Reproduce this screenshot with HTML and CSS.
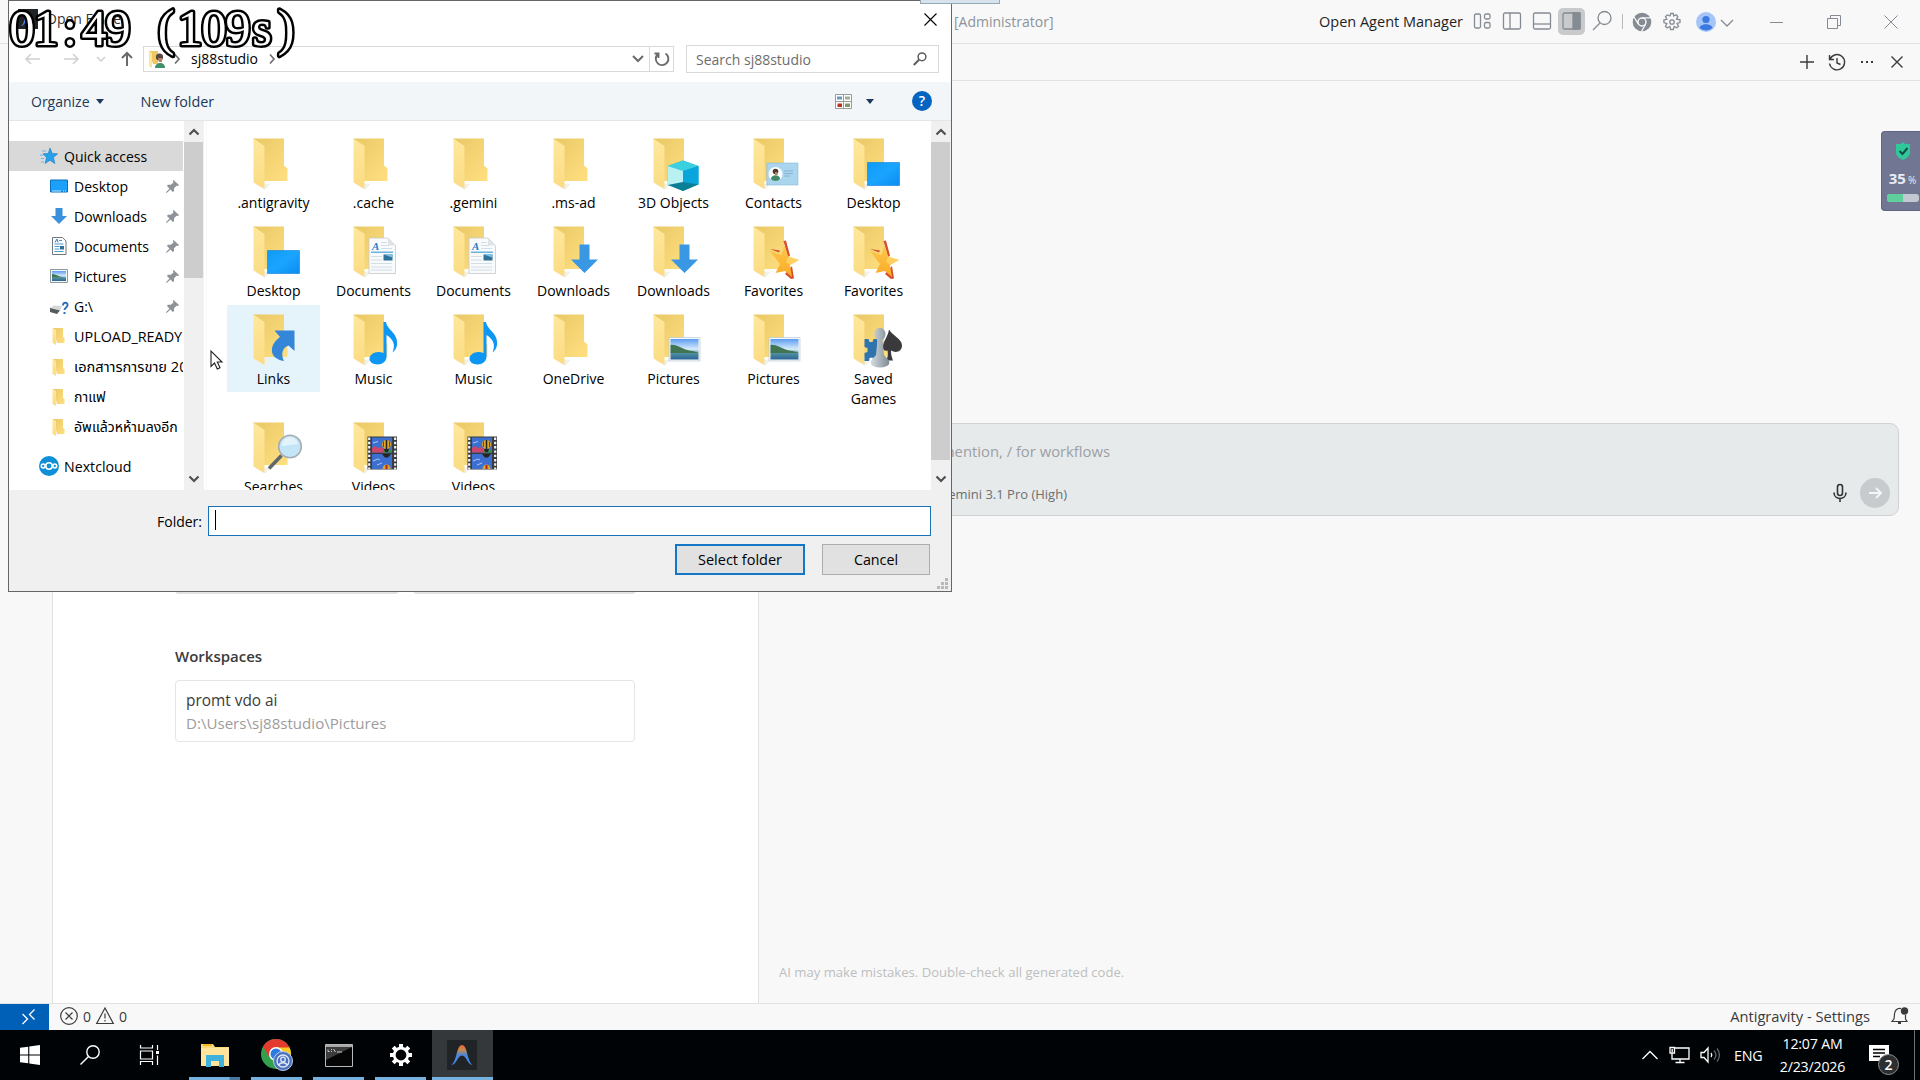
FILE: index.html
```html
<!DOCTYPE html>
<html lang="en">
<head>
    <meta charset="UTF-8">
    <meta name="viewport" content="width=device-width, initial-scale=1.0">
    <title>Antigravity - Settings</title>
    <link rel="stylesheet" href="styles.css">
</head>
<body>
    <!-- Shared icons -->
    <svg class="defs" width="0" height="0">
        <defs>
            <linearGradient id="gBack" x1="0" y1="0" x2="1" y2="1"><stop offset="0" stop-color="#e9c866"/><stop offset="1" stop-color="#ffdf80"/></linearGradient>
            <linearGradient id="gFlap" x1="0" y1="0" x2="0" y2="1"><stop offset="0" stop-color="#ffe79c"/><stop offset="1" stop-color="#fbdc83"/></linearGradient>
            <linearGradient id="gBlue" x1="0" y1="0" x2="1" y2="1"><stop offset="0" stop-color="#0d9cf8"/><stop offset=".5" stop-color="#1ba4ff"/><stop offset="1" stop-color="#0a8cf0"/></linearGradient>
            <linearGradient id="gSky" x1="0" y1="0" x2="0" y2="1"><stop offset="0" stop-color="#5c9cf0"/><stop offset=".5" stop-color="#d8ecfa"/><stop offset=".7" stop-color="#4f8fa0"/><stop offset="1" stop-color="#2c6597"/></linearGradient>
            <linearGradient id="gStar" x1="0" y1="0" x2="0" y2="1"><stop offset="0" stop-color="#fdc94c"/><stop offset="1" stop-color="#fba927"/></linearGradient>
            <linearGradient id="gPawn" x1="0" y1="0" x2="1" y2="0"><stop offset="0" stop-color="#d6dde1"/><stop offset="1" stop-color="#7c8a93"/></linearGradient>
            <linearGradient id="gPeak" x1="0" y1="0" x2="0" y2="1"><stop offset="0" stop-color="#e8663c"/><stop offset=".25" stop-color="#c98a4a"/><stop offset=".5" stop-color="#4b86d8"/><stop offset="1" stop-color="#3d8bf5"/></linearGradient>
        </defs>
        <symbol id="folder" viewBox="0 0 55 54">
            <path d="M9 46l10 5.500 6-6z" fill="#f0f0ee"/>
            <path d="M7.500.5H38V27.500l3.500 3V43H18z" fill="url(#gBack)"/>
            <path d="M7.500.5L18.500 8v43L7.500 44.500z" fill="url(#gFlap)"/>
        </symbol>
        <symbol id="folder-sm" viewBox="0 0 18 18">
            <path d="M3 1h10v9l1.500 1v5H7z" fill="url(#gBack)"/>
            <path d="M2.500 1L6 3v15l-3.500-2z" fill="url(#gFlap)"/>
        </symbol>
        <symbol id="o-desktop" viewBox="0 0 55 54">
            <path d="M21.500 24.500h32v23h-32z" fill="url(#gBlue)" stroke="#0880dc" stroke-width=".6"/>
        </symbol>
        <symbol id="o-doc" viewBox="0 0 55 54">
            <path d="M23 12h19l7.500 7.500v28H23z" fill="#f8fafb" stroke="#c5c9cc" stroke-width=".8"/>
            <path d="M42 12v7.500h7.500z" fill="#dfe3e6"/>
            <path d="M35 16.500h6M35 19.500h8M35 22.500h11M25 30.500h11M25 34h11M25 37.500h21M25 41h21M25 44h21" stroke="#cddae3" stroke-width=".9"/>
            <path d="M25 26.200h22" stroke="#45a3d9" stroke-width="1.200"/>
            <path d="M37.500 28.500h9v6h-9z" fill="#2f7199"/><path d="M37.500 28.500h9v3z" fill="#7cc2ea"/>
            <text x="26" y="24" font-family="Liberation Serif, serif" font-size="11" font-style="italic" font-weight="bold" fill="#2c7fc4">A</text>
        </symbol>
        <symbol id="o-down" viewBox="0 0 55 54">
            <path d="M33.500 18.500h10v15H52L38.500 47 25 33.500h8.500z" fill="#3a97e4"/>
        </symbol>
        <symbol id="o-star" viewBox="0 0 55 54">
            <path d="M37.500 15l2.500-.5 4 15-2 2zM24 23l10 1.500-1 2zM46 40l2 12.500-3 .5-6-5z" fill="#d5512b"/>
            <path d="M38.500 19l3.700 11.500L53 34l-9 5 2 12-7-6L29.500 47l4.500-9L24 25l11.500 4z" fill="url(#gStar)"/>
            <path d="M42.200 30.500L53 34l-9 5-4-3z" fill="#ffdf79" opacity=".6"/>
        </symbol>
        <symbol id="o-music" viewBox="0 0 55 54">
            <path d="M37.500 8h2.500c1 8 12.500 11 11 23-.5 3-2 6-4.500 7.500 3-7 1.500-13-6-17.500V43c0 4-4 7.500-9 7.500-4.500 0-8-2.200-8-5.700 0-4 4.200-6.800 9-6.800 1.800 0 3.500.3 5 1z" fill="#0d96f2"/>
        </symbol>
        <symbol id="o-pic" viewBox="0 0 55 54">
            <path d="M23 23.500h31v23.500H23z" fill="#f3f6f8" stroke="#b9c4cc" stroke-width=".6"/>
            <path d="M24.500 25h28v20.500h-28z" fill="url(#gSky)"/>
            <path d="M24.500 31c5-1 10 3 15 4.500s9 1.500 13 3.500h-28z" fill="#3f7552"/>
        </symbol>
        <symbol id="o-video" viewBox="0 0 55 54">
            <path d="M21.500 14.500h29.500v33H21.500z" fill="#3a3c40"/>
            <path d="M23.200 15.500v32M49.200 15.500v32" stroke="#f1f3f4" stroke-width="2.200" stroke-dasharray="2.400 1.900"/>
            <path d="M26 15.500h20v15H26zM26 32h20v15H26z" fill="#3c6fd0"/>
            <path d="M26 26l3-2 3 2 3-1 4 3v2.500H26z" fill="#c8476a"/><path d="M37 28h9v2.500h-9z" fill="#32964a"/>
            <ellipse cx="40.500" cy="22.500" rx="4.500" ry="4.500" fill="#e3a522"/><path d="M37.500 19.500v5.500M43.500 19.500v5.500" stroke="#a6252e"/><path d="M40.500 18v9" stroke="#27231f" stroke-width="1.500"/><path d="M38 27l5 0-1 3h-3z" fill="#27231f"/>
            <path d="M36 32h9l-3 3.500h-3z" fill="#27231f"/><path d="M36.500 47c0-6 8-6 8 0z" fill="#e3a522"/><path d="M39.500 43h2v4h-2z" fill="#a6252e"/>
            <path d="M27 39l5-2 2 1M27 21l5-1.500M31 43l5-2" stroke="#a9c7f6" fill="none"/>
        </symbol>
        <symbol id="pin" viewBox="0 0 13 13">
            <path d="M7.500 0L13 5l-1 1-1.500-.3L8 8.200v3L6.800 12 4.500 9.500.7 13 0 12.300 3.500 8.500 1 6l.8-1.200h3L7.500 2.500 6.800.8z" fill="#8d9399"/>
        </symbol>
    </svg>

    <!-- Editor window -->
    <div class="titlebar">
        <span class="titlebar-name">[Administrator]</span>
        <span class="agent-link">Open Agent Manager</span>
        <div class="layout-icons">
            <svg width="30" height="27" viewBox="0 0 30 27" class="line"><rect x="6.500" y="6" width="6" height="14" rx="1.500"/><rect x="16.500" y="6" width="5.500" height="5" rx="1.500"/><rect x="16.500" y="14.500" width="5.500" height="5.500" rx="1.500"/></svg>
            <svg width="30" height="27" viewBox="0 0 30 27" class="line"><rect x="5.500" y="5" width="17" height="16" rx="1.500"/><path d="M12 5v16"/></svg>
            <svg width="30" height="27" viewBox="0 0 30 27" class="line"><rect x="5.500" y="5" width="17" height="16" rx="1.500"/><path d="M5.500 16h17"/></svg>
            <svg width="27" height="27" viewBox="0 0 27 27" class="line active"><rect x="5" y="5" width="17" height="16" rx="1.500"/><path d="M15 5h7v16h-7z" fill="#858b92"/></svg>
            <svg width="35" height="27" viewBox="0 0 35 27" class="line"><circle cx="19.500" cy="10" r="6.500"/><path d="M15 15l-7 7"/></svg>
        </div>
        <span class="divider"></span>
        <div class="account-icons">
            <svg width="20" height="20" viewBox="0 0 20 20"><circle cx="10" cy="10" r="9.300" fill="#858b92"/><circle cx="10" cy="10" r="4" fill="#858b92" stroke="#f8f8f8" stroke-width="1.500"/><path d="M10 5.800h9M6.400 12.200L2 5M13.600 12.200L9.500 19.500" stroke="#f8f8f8" stroke-width="1.300"/></svg>
            <svg width="20" height="20" viewBox="0 0 20 20" class="line"><circle cx="10" cy="10" r="2.200"/><path d="M8.800 1.500h2.400l.6 2.500 2.300-1.300 1.700 1.700L14.500 7l3.500.8v2.700l-3 .9 1.500 2.700-1.700 1.700-2.600-1.400-.8 3.100H8.600l-.8-3L5.200 16l-1.800-1.700 1.500-2.700-3-1V8l3-.8-1.400-2.500 1.800-1.800L7.900 4z"/></svg>
            <svg width="20" height="20" viewBox="0 0 20 20" class="avatar"><circle cx="10" cy="10" r="10" fill="#a5c5f8"/><circle cx="10" cy="7.500" r="3.600" fill="#3b78e0"/><path d="M3.500 16c1-5 12-5 13 0a10 10 0 0 1-13 0z" fill="#3b78e0"/></svg>
            <svg width="16" height="20" viewBox="0 0 16 20" class="line"><path d="M2 8l6 6 6-6"/></svg>
        </div>
        <div class="window-buttons">
            <svg width="14" height="14" viewBox="0 0 14 14" class="thin"><path d="M0 7.500h13"/></svg>
            <svg width="14" height="14" viewBox="0 0 14 14" class="thin"><path d="M.5 3.500h10v10H.5zM3.500 3V.5h10v10H11"/></svg>
            <svg width="14" height="14" viewBox="0 0 14 14" class="thin"><path d="M.5.5l13 13M13.500.5l-13 13"/></svg>
        </div>
    </div>

    <div class="workbench">
        <div class="activity-bar"></div>
        <div class="editor">
            <div class="start-buttons"><span></span><span></span></div>
            <h2>Workspaces</h2>
            <div class="workspace">
                <span class="workspace-name">promt vdo ai</span>
                <span class="workspace-path">D:\Users\sj88studio\Pictures</span>
            </div>
        </div>
        <div class="agent-panel">
            <div class="panel-header">
                <svg width="20" height="20" viewBox="0 0 20 20"><path d="M10 3v14M3 10h14"/></svg>
                <svg width="20" height="20" viewBox="0 0 20 20"><path d="M2.500 3v4.500H7M3 7.200A7.600 7.600 0 1 1 2.500 11.500M10 6v5l3.500 1.500"/></svg>
                <svg width="20" height="20" viewBox="0 0 20 20"><path d="M4 10h2M9 10h2M14 10h2" stroke-width="2"/></svg>
                <svg width="20" height="20" viewBox="0 0 20 20"><path d="M4.500 4.500l11 11M15.500 4.500l-11 11"/></svg>
            </div>
            <div class="prompt-box">
                <div class="prompt-text">Ask anything, @ to mention, / for workflows</div>
                <div class="prompt-tools">
                    <span class="model">Gemini 3.1 Pro (High)</span>
                    <svg width="20" height="20" viewBox="0 0 20 20" fill="none" stroke="#333" stroke-width="1.600"><rect x="7.500" y="1.500" width="5" height="11" rx="2.500"/><path d="M4 9.500c0 8 12 8 12 0M10 15.500V19"/></svg>
                    <svg width="30" height="30" viewBox="0 0 30 30" class="send"><circle cx="15" cy="15" r="15" fill="#c8cbce"/><path d="M9 15h12M16 10l5 5-5 5" fill="none" stroke="#f5f6f7" stroke-width="1.800"/></svg>
                </div>
            </div>
            <div class="disclaimer">AI may make mistakes. Double-check all generated code.</div>
        </div>
    </div>

    <div class="statusbar">
        <span class="remote"><svg width="16" height="18" viewBox="0 0 16 18"><path d="M1.500 6l5 5-5 5M13.500 1.500l-5 5 5 5" fill="none" stroke="#fff" stroke-width="1.300"/></svg></span>
        <svg width="20" height="20" viewBox="0 0 20 20"><circle cx="10" cy="10" r="8.300"/><path d="M6.500 6.500l7 7M13.500 6.500l-7 7"/></svg>
        <span class="count">0</span>
        <svg width="20" height="20" viewBox="0 0 20 20"><path d="M10 2l8.300 15.500H1.700zM10 7.500v5M10 14v1.500"/></svg>
        <span class="count">0</span>
        <span class="status-name">Antigravity - Settings</span>
        <svg width="20" height="20" viewBox="0 0 20 20"><path d="M11 2.500C6.500 2 5 4 4.500 8l-.5 5-2 2.500h15L15.500 13V9"/><path d="M8 17h3" stroke-width="2"/><circle cx="14.500" cy="5" r="3.700" fill="#3b3b3b" stroke="none"/></svg>
    </div>

    <!-- Windows taskbar -->
    <div class="taskbar">
        <div class="task plain"><svg width="20" height="20" viewBox="0 0 20 20" fill="#fff"><path d="M0 2.800l8.200-1.100v7.800H0zM9.300 1.500L20 0v9.500H9.300zM0 10.500h8.200v7.800L0 17.200zM9.300 10.500H20V20L9.300 18.500z"/></svg></div>
        <div class="task plain"><svg width="20" height="20" viewBox="0 0 20 20" fill="none" stroke="#fff" stroke-width="1.400"><circle cx="13" cy="7" r="6.200"/><path d="M8.500 11.500L.5 19.500"/></svg></div>
        <div class="task plain"><svg width="22" height="20" viewBox="0 0 22 20" fill="none" stroke="#fff" stroke-width="1.200"><path d="M1.500 0v3h12V0M1.500 20v-3.500h12V20M1.500 6h12v8h-12zM18.500 0v5M18.500 10.500V20"/><path d="M17 6h3v3h-3z" fill="#fff" stroke="none"/></svg></div>
        <div class="task wide running stacked"><svg width="28" height="24" viewBox="0 0 28 24"><path d="M0 1h12l2 3h14v19H0z" fill="#fbd977"/><path d="M0 5h28v18H0z" fill="#ffe59b"/><path d="M2 1h9v2H2z" fill="#f3b72b"/><path d="M5 24V12h18v12h-5v-6h-8v6z" fill="#3fb1df"/></svg></div>
        <div class="task running"><svg width="32" height="32" viewBox="0 0 32 32"><circle cx="15" cy="15" r="15" fill="#34a04d"/><path d="M2 7.500A15 15 0 0 1 28 7.500L15 15z" fill="#e33b2e"/><path d="M28 7.500A15 15 0 0 1 15 30l7-12-7-10h13z" fill="#fbc91f"/><path d="M2 7.500h26v1H15l-7 9z" fill="#e33b2e"/><circle cx="15" cy="15" r="7" fill="#fff"/><circle cx="15" cy="15" r="5.500" fill="#2d7be0"/><circle cx="22" cy="22" r="9.500" fill="#4a72bd" stroke="#b9ccee"/><circle cx="22" cy="22" r="6" fill="none" stroke="#dfe8fa" stroke-width="1.300"/><circle cx="22" cy="20.500" r="2.300" fill="none" stroke="#dfe8fa" stroke-width="1.300"/><path d="M18 26c1-3 7-3 8 0" fill="none" stroke="#dfe8fa" stroke-width="1.300"/></svg></div>
        <div class="task running"><svg width="28" height="23" viewBox="0 0 28 23"><path d="M.5.5h27v22H.5z" fill="#050505" stroke="#b9b9b9"/><path d="M1 1h26v2H1z" fill="#a9a9a9"/><path d="M1 3h26L1 16z" fill="#3c3c3c"/><path d="M3 5.500v2h1.500M6.500 5v1M6.500 7v1M8.500 5l2 3M12 8h5" stroke="#ddd" fill="none" stroke-width=".9"/></svg></div>
        <div class="task running"><svg width="24" height="24" viewBox="0 0 24 24" fill="none" stroke="#fff"><circle cx="12" cy="12" r="6.800" stroke-width="2.800"/><path d="M12 1v4M12 19v4M1 12h4M19 12h4M4.200 4.200L7 7M17 17l2.800 2.800M4.200 19.800L7 17M17 7l2.800-2.800" stroke-width="4"/></svg></div>
        <div class="task running current"><svg width="30" height="30" viewBox="0 0 30 30"><path d="M0 0h30v30H0z" fill="#202427"/><path d="M4.500 25C10 21 9.500 5 15 5s5 16 10.500 20c-5 0-6-9.500-10.500-9.500S9.500 25 4.500 25z" fill="url(#gPeak)"/></svg></div>

        <div class="tray">
            <svg width="18" height="18" viewBox="0 0 18 18"><path d="M1.500 13L9 5.500l7.500 7.500"/></svg>
            <svg width="21" height="18" viewBox="0 0 21 18"><path d="M5 2h15v11H3V7M11 13v3.500M6.500 16.500h9"/><path d="M1 1.500h4.500V7H1zM3.200 3v3" /></svg>
            <svg width="21" height="18" viewBox="0 0 21 18"><path d="M1 6.500h3l4-4.500v14l-4-4.500H1z"/><path d="M11 7q1.500 2 0 4"/><path d="M14 4.500q4 4.500 0 9M17 2.500q5 6.500 0 13" stroke="#666"/></svg>
            <span class="lang">ENG</span>
            <div class="clock"><span>12:07 AM</span><span>2/23/2026</span></div>
            <div class="notice"><svg width="20" height="20" viewBox="0 0 20 20"><path d="M0 0h20v16h-4v4l-5-4H0z" fill="#fff" stroke="none"/><path d="M4 4.500h12M4 8h12M4 11.500h7" stroke="#000"/></svg><span class="badge">2</span></div>
        </div>
        <span class="show-desktop"></span>
    </div>

    <!-- Open folder dialog -->
    <div class="dialog">
        <div class="dialog-title">
            <svg width="20" height="20" viewBox="0 0 20 20"><path d="M0 0h20v20H0z" fill="#202427"/><path d="M3 17c4-2 3.500-13 7-13s3.500 11 7 13c-4 0-4-6-7-6s-3 6-7 6z" fill="#3d8bf5"/></svg>
            <span>Open Folder</span>
            <svg class="close" width="13" height="13" viewBox="0 0 13 13"><path d="M.5.5l12 12M12.500.5l-12 12" stroke="#000" stroke-width="1.100"/></svg>
        </div>
        <div class="address-row">
            <svg width="115" height="26" viewBox="0 0 115 26" fill="none" stroke="#d0d0d0" stroke-width="1.500"><path d="M31 14H17M22 9l-5 5 5 5M55 14h14M64 9l5 5-5 5M88 12l4 4 4-4"/><path d="M118 21V8M113 13l5-5 5 5" stroke="#6b6b6b" stroke-width="2"/></svg>
            <div class="address">
                <svg class="user" width="17" height="19" viewBox="0 0 17 19"><path d="M1 1h9v13H5z" fill="#ecc964"/><path d="M1 1l3 2v15l-3-2z" fill="#ffe596"/><path d="M7 18c0-6 10-7 10 0z" fill="#3f9169"/><circle cx="11.500" cy="7" r="3.600" fill="#5c4740"/><path d="M10 8h4v4h-3z" fill="#b9805e"/></svg>
                <svg width="10" height="12" viewBox="0 0 10 12"><path d="M3 1.500L7 6l-4 4.500"/></svg>
                <span>sj88studio</span>
                <svg width="10" height="12" viewBox="0 0 10 12"><path d="M3 1.500L7 6l-4 4.500"/></svg>
                <svg class="drop" width="12" height="10" viewBox="0 0 12 10"><path d="M1 2l5 5 5-5" stroke-width="2"/></svg>
                <span class="refresh"><svg width="16" height="16" viewBox="0 0 16 16"><path d="M11.500 2.500A6.300 6.300 0 1 1 4 3M4.500 7V2.500H.5" stroke-width="1.900"/></svg></span>
            </div>
            <div class="search">
                <span>Search sj88studio</span>
                <svg width="14" height="14" viewBox="0 0 14 14" fill="none" stroke="#5e5e5e"><circle cx="9" cy="4.800" r="3.900" stroke-width="1.500"/><path d="M6 7.800L.8 13" stroke-width="2"/></svg>
            </div>
        </div>
        <div class="toolbar">
            <span>Organize</span><i class="caret"></i>
            <span class="new-folder">New folder</span>
            <svg class="view" width="17" height="15" viewBox="0 0 17 15"><path d="M.5.5h16v14H.5zM8.500.5v14M.5 7.500h16" fill="#fff" stroke="#9a9a9a"/><path d="M2 2.500h5v3H2z" fill="#6a9abb"/><path d="M10 2.500h5v3h-5z" fill="#a0ae93"/><path d="M2.500 9.500H7V13H2.500z" fill="#b9331f"/><path d="M10 9.500h5V13h-5z" fill="#7c9a66"/></svg>
            <i class="caret view-caret"></i>
            <span class="help">?</span>
        </div>
        <div class="panes">
            <div class="nav">
                <div class="nav-row top selected"><svg width="18" height="18" viewBox="0 0 18 18"><path d="M10 1l2.200 5.500 5.500.3-4.300 3.700 1.500 6-5-3.200-4.800 3.200 1.400-6L3 6.800l5.300-.3z" fill="#27a0ee" stroke="#1877bd" stroke-width=".6"/><path d="M2 4h4M0 8h3M1 11.500h3M1 15h3" stroke="#65b7ea"/></svg><span>Quick access</span></div>
                <div class="nav-row"><svg width="18" height="18" viewBox="0 0 18 18"><path d="M.5 3h17v12H.5z" fill="#1ba1fb" stroke="#0c6fbd"/><path d="M2 14h9M13 14h1M15 14h1" stroke="#bfe3fb"/></svg><span>Desktop</span><svg class="pin" width="13" height="13"><use href="#pin"/></svg></div>
                <div class="nav-row"><svg width="18" height="18" viewBox="0 0 18 18"><path d="M5.500 1h7v8H17l-8 8-8-8h4.500z" fill="#3a90da"/></svg><span>Downloads</span><svg class="pin" width="13" height="13"><use href="#pin"/></svg></div>
                <div class="nav-row"><svg width="18" height="18" viewBox="0 0 18 18"><path d="M2.500.5h10l3.500 3.500v13.500H2.500z" fill="#fff" stroke="#70797f"/><path d="M4.500 7h9M4.500 9.500h5M4.500 12h5M4.500 14.500h9M9 3.500h3" stroke="#4c9bce"/><path d="M10 9h4v3.500h-4z" fill="#2f7199"/><path d="M5 5.500L7 2l1 3.500" stroke="#2c7fc4" fill="none"/></svg><span>Documents</span><svg class="pin" width="13" height="13"><use href="#pin"/></svg></div>
                <div class="nav-row"><svg width="18" height="18" viewBox="0 0 18 18"><path d="M.5 2.500h17v13H.5z" fill="#f5f7f8" stroke="#8e989f"/><path d="M2 4h14v10H2z" fill="url(#gSky)"/><path d="M2 7c4 0 6 3 14 3.500H2z" fill="#3f7552"/></svg><span>Pictures</span><svg class="pin" width="13" height="13"><use href="#pin"/></svg></div>
                <div class="nav-row"><svg width="18" height="18" viewBox="0 0 18 18"><path d="M0 11l4-2.500 8 .5-2 4.500z" fill="#d5d7d8"/><path d="M0 11l10 2.500L7 17l-7-2z" fill="#565b5e"/><path d="M13 8.500c0-4 5-3.500 4.500 0-.3 2.500-3 2-3 4.500M14.500 15v2" fill="none" stroke="#2f6fb3" stroke-width="2"/></svg><span>G:\</span><svg class="pin" width="13" height="13"><use href="#pin"/></svg></div>
                <div class="nav-row upload"><svg width="18" height="18"><use href="#folder-sm"/></svg><span>UPLOAD_READY</span></div>
                <div class="nav-row thai"><svg width="18" height="18"><use href="#folder-sm"/></svg><span class="wide">เอกสาารการขาย 20</span></div>
                <div class="nav-row thai"><svg width="18" height="18"><use href="#folder-sm"/></svg><span>กาแฟ</span></div>
                <div class="nav-row thai"><svg width="18" height="18"><use href="#folder-sm"/></svg><span>อัพแล้วหห้ามลงอีก</span></div>
                <div class="nav-row top cloud"><svg width="20" height="20" viewBox="0 0 20 20"><circle cx="10" cy="10" r="10" fill="#0f8fd8"/><g fill="none" stroke="#fff" stroke-width="1.500"><circle cx="10" cy="10" r="3.200"/><circle cx="4.200" cy="10" r="1.900"/><circle cx="15.800" cy="10" r="1.900"/></g></svg><span>Nextcloud</span></div>
            </div>
            <div class="scroll nav-scroll">
                <svg width="12" height="8" viewBox="0 0 12 8"><path d="M1.500 6.500L6 2l4.500 4.500"/></svg>
                <div class="thumb"></div>
                <svg width="12" height="8" viewBox="0 0 12 8"><path d="M1.500 1.500L6 6l4.500-4.500"/></svg>
            </div>
            <div class="files">
                <div class="file"><svg width="55" height="54"><use href="#folder"/></svg><span>.antigravity</span></div>
                <div class="file"><svg width="55" height="54"><use href="#folder"/></svg><span>.cache</span></div>
                <div class="file"><svg width="55" height="54"><use href="#folder"/></svg><span>.gemini</span></div>
                <div class="file"><svg width="55" height="54"><use href="#folder"/></svg><span>.ms-ad</span></div>
                <div class="file"><svg width="55" height="54"><use href="#folder"/><path d="M37 22.500l15.500 5.500v18L37 53l-15.300-7V28z" fill="#2cb9d2"/><path d="M37 22.500l15.500 5.500L37 33l-15.300-5z" fill="#3ccfe0"/><path d="M21.700 28L37 33v12l-15.300 3z" fill="#b9f0f2"/><path d="M52.500 28L37 33v11l15.500 3z" fill="#08a6dc"/><path d="M37 44l15.500 2.500L37 53l-15.300-6z" fill="#0b7f95"/></svg><span>3D Objects</span></div>
                <div class="file"><svg width="55" height="54"><use href="#folder"/><path d="M20.800 25H52v22H20.800z" fill="#a9d5ee" stroke="#8ab9d4" stroke-width=".6"/><circle cx="29.500" cy="36" r="7" fill="#fff"/><path d="M25 41c0-5 9-5 9 0-1 2.500-8 2.500-9 0z" fill="#3f8a68"/><circle cx="29.500" cy="33.500" r="2.800" fill="#4b3932"/><path d="M29 34h2.500v3H29z" fill="#b9805e"/><path d="M38 33h9M38 35.500h9M38 38h6" stroke="#7fabc8" stroke-width=".8"/></svg><span>Contacts</span></div>
                <div class="file"><svg width="55" height="54"><use href="#folder"/><use href="#o-desktop"/></svg><span>Desktop</span></div>

                <div class="file"><svg width="55" height="54"><use href="#folder"/><use href="#o-desktop"/></svg><span>Desktop</span></div>
                <div class="file"><svg width="55" height="54"><use href="#folder"/><use href="#o-doc"/></svg><span>Documents</span></div>
                <div class="file"><svg width="55" height="54"><use href="#folder"/><use href="#o-doc"/></svg><span>Documents</span></div>
                <div class="file"><svg width="55" height="54"><use href="#folder"/><use href="#o-down"/></svg><span>Downloads</span></div>
                <div class="file"><svg width="55" height="54"><use href="#folder"/><use href="#o-down"/></svg><span>Downloads</span></div>
                <div class="file"><svg width="55" height="54"><use href="#folder"/><use href="#o-star"/></svg><span>Favorites</span></div>
                <div class="file"><svg width="55" height="54"><use href="#folder"/><use href="#o-star"/></svg><span>Favorites</span></div>

                <div class="file hover"><svg width="55" height="54"><use href="#folder"/><path d="M28.500 16.500h20V37l-6-5.500c-6 2-8 9-4.500 15.500C30 46 25 41 26 35c.5-5 3.500-8.500 8-12z" fill="#3487d8"/></svg><span>Links</span></div>
                <div class="file"><svg width="55" height="54"><use href="#folder"/><use href="#o-music"/></svg><span>Music</span></div>
                <div class="file"><svg width="55" height="54"><use href="#folder"/><use href="#o-music"/></svg><span>Music</span></div>
                <div class="file"><svg width="55" height="54"><use href="#folder"/></svg><span>OneDrive</span></div>
                <div class="file"><svg width="55" height="54"><use href="#folder"/><use href="#o-pic"/></svg><span>Pictures</span></div>
                <div class="file"><svg width="55" height="54"><use href="#folder"/><use href="#o-pic"/></svg><span>Pictures</span></div>
                <div class="file"><svg width="55" height="54"><use href="#folder"/><path d="M18.500 25h4l1 3h3l1-3h4v22h-4l-1-3.500-3 .5-.5 3h-4.500V39l3-1v-4l-3-1z" fill="#2f74ae"/><path d="M43 15.500c3 6 13 9 13 16 0 6-6 8-11 5 0 4 .5 6 2 10h-7c2-3 2-6 1.500-10-3 1-5-1-4.500-4 .5-6 5-10 6-17z" fill="#3a3a3d"/><path d="M31.500 26c-2.500-1.500-3-4.500-3-6.500 0-3.500 3-5.500 5.500-5.500s5.500 2 5.500 5.500c0 2-.5 5-3 6.500l1.500 15 4.500 5c2 3 1 7-8.500 7.500-9.500-.5-10.500-4.500-8.500-7.500l4.500-5z" fill="url(#gPawn)"/></svg><span>Saved Games</span></div>

                <div class="file"><svg width="55" height="54"><use href="#folder"/><path d="M35.500 33.500L23 46.500" stroke="#5f676c" stroke-width="3.500"/><circle cx="44" cy="24.500" r="11.300" fill="#c4e5f7" stroke="#a7adb1" stroke-width="1.600"/><path d="M36 24a8 8 0 0 1 16-2z" fill="#e2f3fc"/></svg><span>Searches</span></div>
                <div class="file"><svg width="55" height="54"><use href="#folder"/><use href="#o-video"/></svg><span>Videos</span></div>
                <div class="file"><svg width="55" height="54"><use href="#folder"/><use href="#o-video"/></svg><span>Videos</span></div>
            </div>
            <div class="scroll">
                <svg width="12" height="8" viewBox="0 0 12 8"><path d="M1.500 6.500L6 2l4.500 4.500"/></svg>
                <div class="thumb"></div>
                <svg width="12" height="8" viewBox="0 0 12 8"><path d="M1.500 1.500L6 6l4.500-4.500"/></svg>
            </div>
        </div>
        <div class="dialog-footer">
            <div class="folder-row"><span>Folder:</span><div class="folder-input"><i></i></div></div>
            <div class="button-row"><button class="primary">Select folder</button><button>Cancel</button></div>
        </div>
        <svg class="grip" width="12" height="12" viewBox="0 0 12 12" fill="#b8b8b8"><path d="M8 0h3v3H8zM4 4h3v3H4zM8 4h3v3H8zM0 8h3v3H0zM4 8h3v3H4zM8 8h3v3H8z"/></svg>
    </div>

    <!-- Floating items over the desktop -->
    <div class="top-tab"></div>
    <div class="monitor">
        <svg width="16" height="18" viewBox="0 0 16 18"><path d="M8 0l2 2h5v8c0 4-3 6-7 8-4-2-7-4-7-8V2h5z" fill="#2fc898"/><path d="M4.500 9l3 3 5-6" fill="none" stroke="#174c48" stroke-width="2"/></svg>
        <div class="percent">35<small>%</small></div>
        <div class="meter"><i></i></div>
    </div>
    <svg class="timer" width="310" height="60"><text y="45" x="22 46 70 94 118 142 166 190 214 238 262 286">01:49 (109s)</text></svg>
    <svg class="cursor" width="14" height="21" viewBox="0 0 14 21"><path d="M1 1v15.500l3.500-3.500 2.800 6 2.700-1.200L7.300 12H12z" fill="#fff" stroke="#222" stroke-width="1.100"/></svg>
</body>
</html>
```

FILE: styles.css
```css
* {
    box-sizing: border-box;
}
body {
    margin: 0;
    width: 1920px;
    height: 1080px;
    overflow: hidden;
    display: flex;
    flex-direction: column;
    position: relative;
    background-color: #f8f8f8;
    font-family: "Open Sans", "Noto Sans", "Segoe UI", sans-serif;
    font-size: 14px;
    color: #000;
    white-space: nowrap;
}
svg {
    display: block;
    flex: none;
    overflow: visible;
}
.defs {
    position: absolute;
}

/* Title bar */
.titlebar {
    height: 44px;
    flex: none;
    display: flex;
    align-items: center;
    border-bottom: 1px solid #e2e2e2;
    padding-left: 954px;
}
.titlebar-name {
    color: #8d9399;
    font-size: 14px;
}
.agent-link {
    margin-left: auto;
    width: 146px;
    font-size: 14.5px;
    color: #1f1f1f;
}
.line, .thin {
    fill: none;
    stroke: #858b92;
    stroke-width: 1.3;
}
.thin {
    stroke-width: 1;
}
.layout-icons {
    display: flex;
    margin-left: 3px;
}
.layout-icons .active {
    background-color: #c9cacb;
    border-radius: 5px;
}
.divider {
    width: 1px;
    height: 15px;
    margin: 0 9px 0 2px;
    background-color: #b5b9bd;
}
.account-icons {
    display: flex;
    gap: 10px;
    width: 103px;
}
.account-icons .avatar {
    margin-left: 4px;
}
.account-icons svg:last-child {
    margin-left: -7px;
}
.window-buttons {
    display: flex;
    gap: 43px;
    margin: 0 22px 0 35px;
}

/* Workbench */
.workbench {
    flex: 1;
    display: flex;
}
.activity-bar {
    width: 53px;
    border-right: 1px solid #e2e2e2;
}
.editor {
    width: 706px;
    background-color: #fff;
    border-right: 1px solid #e2e2e2;
    padding: 530px 122px 0 122px;
}
.start-buttons {
    display: flex;
    gap: 14px;
    height: 20px;
}
.start-buttons span {
    flex: 1;
    background-color: #e2e2e2;
    border-radius: 4px;
}
.editor h2 {
    margin: 52px 0 0 0;
    font-size: 15px;
    line-height: 20px;
    font-weight: 600;
    color: #3b3b3b;
}
.workspace {
    display: flex;
    flex-direction: column;
    width: 460px;
    height: 62px;
    margin-top: 14px;
    padding: 8px 10px;
    border: 1px solid #e5e5e5;
    border-radius: 4px;
    line-height: 23px;
}
.workspace-name {
    font-size: 15.4px;
    color: #3b3b3b;
}
.workspace-path {
    font-size: 15.1px;
    color: #9c9c9c;
}
.agent-panel {
    flex: 1;
    display: flex;
    flex-direction: column;
}
.panel-header {
    height: 37px;
    display: flex;
    justify-content: flex-end;
    align-items: center;
    gap: 10px;
    padding-right: 13px;
    border-bottom: 1px solid #e2e2e2;
    fill: none;
    stroke: #3b3b3b;
    stroke-width: 1.4;
}
.prompt-box {
    margin: 342px 21px 0 19px;
    height: 93px;
    border: 1px solid #d0d3d6;
    border-radius: 9px;
    background-color: #e7eaeb;
    padding: 16px 8px 0 16px;
    display: flex;
    flex-direction: column;
}
.prompt-text {
    color: #9ba0a3;
    font-size: 14.8px;
    line-height: 22px;
    width: 315px;
    display: flex;
    justify-content: flex-end;
}
.prompt-tools {
    display: flex;
    align-items: center;
    margin-top: 16px;
}
.model {
    width: 272px;
    margin-right: auto;
    padding-top: 1px;
    text-align: right;
    font-size: 13px;
    color: #6b6f72;
}
.send {
    margin-left: 10px;
}
.disclaimer {
    margin: auto 0 20px 20px;
    font-size: 13.1px;
    line-height: 22px;
    color: #bcbfc1;
}

/* Status bar */
.statusbar {
    height: 27px;
    flex: none;
    display: flex;
    align-items: center;
    border-top: 1px solid #e2e2e2;
    color: #3b3b3b;
    padding: 0 10px 2px 0;
    fill: none;
    stroke: #3b3b3b;
    stroke-width: 1.2;
}
.remote {
    width: 49px;
    height: 26px;
    margin: 2px 10px 0 0;
    padding: 4px 0 0 21px;
    background-color: #0060b8;
}
.count {
    width: 16px;
    padding-left: 4px;
}
.status-name {
    margin-left: auto;
    margin-right: 20px;
    font-size: 14.7px;
}

/* Taskbar */
.taskbar {
    height: 50px;
    flex: none;
    display: flex;
    background-color: #000305;
    color: #fff;
}
.task {
    width: 62px;
    display: flex;
    align-items: center;
    justify-content: center;
    padding: 0 6px 0 5px;
}
.task.plain {
    width: 60px;
}
.task.running {
    position: relative;
}
.task.wide {
    width: 66px;
    padding-left: 9px;
}
.task.running::after {
    content: "";
    position: absolute;
    left: 5px;
    right: 6px;
    bottom: 0;
    height: 3px;
    background-color: #76b2e0;
}
.task.wide::after {
    left: 9px;
}
.task.stacked::after {
    background-image: linear-gradient(90deg, #76b2e0 40px, #4d7799 41px);
}
.task.current {
    width: 61px;
    margin-left: 0;
    padding: 0 1px 0 0;
    background-color: #34383b;
}
.task.current::after {
    left: 0;
    right: 0;
}
.tray {
    margin-left: auto;
    display: flex;
    align-items: center;
    fill: none;
    stroke: #fff;
    stroke-width: 1.3;
}
.tray > svg {
    margin-right: 10px;
}
.tray > svg:nth-child(3) {
    margin-right: 13px;
}
.lang {
    width: 42px;
    font-size: 14.3px;
    letter-spacing: -0.2px;
}
.clock {
    width: 74px;
    display: flex;
    flex-direction: column;
    align-items: center;
    line-height: 23px;
    padding-right: 1px;
    font-size: 14.2px;
    letter-spacing: -0.2px;
}
.notice {
    position: relative;
    margin: 0 25px 0 19px;
}
.badge {
    position: absolute;
    left: 9px;
    top: 9px;
    width: 21px;
    height: 21px;
    border: 1px solid #8d8f90;
    border-radius: 50%;
    background-color: #2c2f31;
    font-size: 14px;
    font-weight: 600;
    line-height: 19px;
    text-align: center;
}
.show-desktop {
    width: 6px;
    border-left: 1px solid #6d6f70;
}

/* Dialog */
.dialog {
    position: absolute;
    left: 8px;
    top: 0;
    width: 944px;
    height: 592px;
    border: 1px solid #666;
    background-color: #fff;
    display: flex;
    flex-direction: column;
}
.dialog-title {
    height: 44px;
    display: flex;
    align-items: flex-start;
    padding: 8px 14px 0 9px;
}
.dialog-title span {
    margin-left: 8px;
    line-height: 20px;
    color: #333;
}
.dialog-title .close {
    margin: 4px 0 0 auto;
}
.address-row {
    height: 37px;
    display: flex;
    align-items: flex-start;
}
.address {
    width: 531px;
    height: 26px;
    margin: 1px 12px 0 19px;
    border: 1px solid #d9d9d9;
    display: flex;
    align-items: center;
    fill: none;
    stroke: #6b6b6b;
    stroke-width: 1.6;
}
.address .user {
    margin: 0 7px 0 4px;
    stroke: none;
}
.address span {
    padding: 0 9px 2px 9px;
}
.address .drop {
    margin-left: auto;
}
.address .refresh {
    width: 24px;
    height: 24px;
    margin-left: 5px;
    padding: 4px 0 0 4px;
    border-left: 1px solid #d9d9d9;
}
.search {
    width: 253px;
    height: 28px;
    border: 1px solid #d9d9d9;
    display: flex;
    align-items: center;
    justify-content: space-between;
    padding: 0 11px 0 9px;
    color: #6d6d6d;
}
.toolbar {
    height: 39px;
    flex: none;
    display: flex;
    align-items: center;
    padding: 0 19px 0 22px;
    background-color: #f2f6f8;
    border-bottom: 1px solid #e3e6e8;
    color: #1e395b;
}
.caret {
    margin-left: 6px;
    border: 4px solid transparent;
    border-top: 5px solid #1e395b;
    border-bottom: 0;
}
.new-folder {
    margin-left: 37px;
    font-size: 14.4px;
}
.view {
    margin-left: auto;
}
.view-caret {
    margin: 0 38px 0 14px;
}
.help {
    width: 20px;
    height: 20px;
    border-radius: 50%;
    background-color: #0563c1;
    color: #fff;
    font-size: 14px;
    font-weight: 600;
    line-height: 20px;
    text-align: center;
}
.panes {
    height: 369px;
    flex: none;
    display: flex;
}
.nav {
    width: 175px;
    padding-top: 20px;
    overflow: hidden;
}
.nav-row {
    width: 174px;
    height: 30px;
    display: flex;
    align-items: center;
    padding-left: 41px;
    overflow: hidden;
}
.nav-row span {
    margin-left: 6px;
    flex: none;
}
.nav-row.top {
    padding-left: 31px;
}
.nav-row.selected {
    background-color: #d9d9d9;
}
.nav-row.cloud {
    margin-top: 10px;
    padding-left: 30px;
}
.nav-row.cloud span {
    margin-left: 5px;
    font-size: 14.2px;
}
.nav-row .pin {
    margin: 0 4px 0 auto;
}
.nav-row.upload span {
    font-size: 14.4px;
}
.nav-row.thai {
    font-family: "Open Sans", "Noto Sans Thai", "Noto Sans", "DejaVu Sans", sans-serif;
    padding-top: 2px;
}
.nav-row.thai span {
    font-size: 14.1px;
}
.nav-row.thai .wide {
    font-size: 14.6px;
}
.scroll {
    width: 20px;
    flex: none;
    display: flex;
    flex-direction: column;
    align-items: center;
    justify-content: space-between;
    padding: 7px 1px 7px 0;
    background-color: #f0f0f0;
    fill: none;
    stroke: #505050;
    stroke-width: 2.2;
}
.scroll .thumb {
    width: 19px;
    height: 318px;
    margin: 6px 0 auto 0;
    flex: none;
    background-color: #cdcdcd;
}
.nav-scroll .thumb {
    height: 136px;
}
.files {
    flex: 1;
    margin-left: 2px;
    padding: 8px 0 0 20px;
    border-left: 1px solid #f8f8f8;
    display: grid;
    grid-template-columns: repeat(7, 100px);
    grid-template-rows: 88px 88px 108px 88px;
    overflow: hidden;
}
.file {
    width: 93px;
    height: 87px;
    padding-top: 9px;
    display: flex;
    flex-direction: column;
    align-items: center;
}
.file span {
    max-width: 80px;
    margin-top: 1px;
    line-height: 20px;
    text-align: center;
    white-space: normal;
}
.file.hover {
    background-color: #e5f3fb;
}
.dialog-footer {
    flex: 1;
    padding: 16px 20px 0 0;
    background-color: #f0f0f0;
}
.folder-row, .button-row {
    display: flex;
    justify-content: flex-end;
    align-items: center;
}
.folder-input {
    width: 723px;
    height: 30px;
    margin-left: 6px;
    padding: 3px 6px;
    border: 1px solid #1a73b8;
    background-color: #fff;
}
.folder-input i {
    display: block;
    width: 1px;
    height: 20px;
    background-color: #000;
}
.button-row {
    margin: 8px 1px 0 0;
    gap: 17px;
}
.button-row button {
    width: 108px;
    height: 31px;
    padding: 0;
    border: 1px solid #adadad;
    background-color: #e1e1e1;
    font-family: inherit;
    font-size: 14.3px;
    color: #000;
}
.button-row .primary {
    width: 130px;
    border: 2px solid #1476c6;
    font-size: 14.5px;
}
.grip {
    position: absolute;
    right: 2px;
    bottom: 1px;
}

/* Floating items */
.top-tab {
    position: absolute;
    left: 920px;
    top: 0;
    width: 80px;
    height: 4px;
    border: 1px solid #94a9b8;
    border-top: 0;
    background-color: #d7e3ec;
}
.monitor {
    position: absolute;
    left: 1881px;
    top: 131px;
    width: 39px;
    height: 80px;
    display: flex;
    flex-direction: column;
    align-items: center;
    padding: 10px 0 0 3px;
    border: 1px solid #5d6684;
    border-right: 0;
    border-radius: 4px 0 0 4px;
    background-color: #717792;
}
.percent {
    margin-top: 8px;
    font-size: 15px;
    line-height: 21px;
    font-weight: 700;
    color: #e9ebf5;
}
.percent small {
    margin-left: 2px;
    font-size: 10px;
    font-weight: 400;
}
.meter {
    width: 32px;
    height: 8px;
    margin-top: 3px;
    border-radius: 3px;
    background-color: #c3c8d3;
    overflow: hidden;
}
.meter i {
    display: block;
    width: 50%;
    height: 8px;
    background-color: #5fcf9c;
}
.timer {
    position: absolute;
    left: 0;
    top: 0;
    font-family: "Liberation Serif", serif;
    font-size: 50px;
    text-anchor: middle;
    fill: #fff;
    stroke: #000;
    stroke-width: 5px;
    stroke-linejoin: round;
    paint-order: stroke fill;
}
.cursor {
    position: absolute;
    left: 210px;
    top: 350px;
}
```
